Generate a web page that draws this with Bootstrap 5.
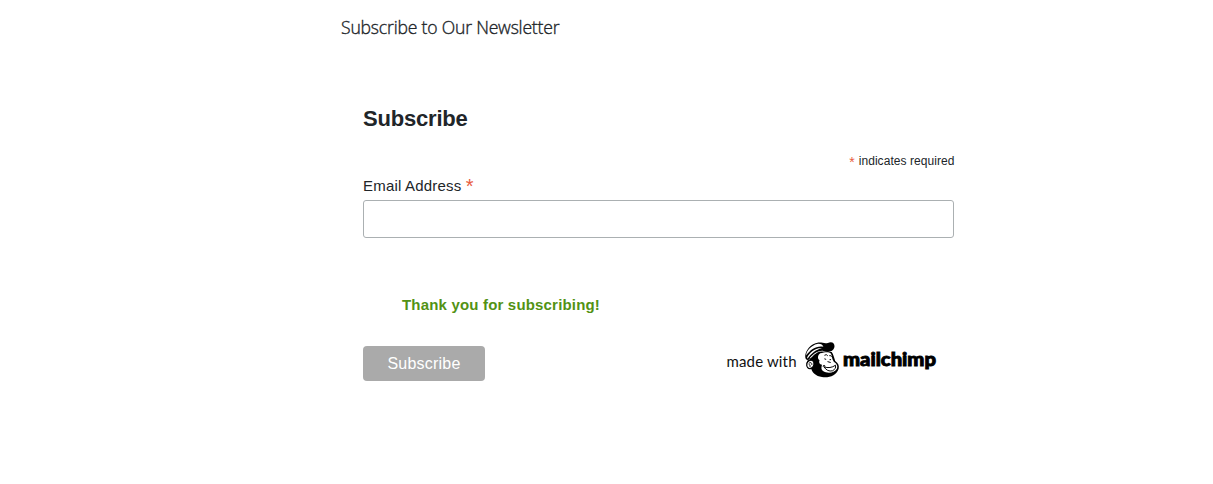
<!DOCTYPE html>
<html lang="en">
<head>
<meta charset="utf-8">
<title>Newsletter</title>
<meta name="viewport" content="width=device-width, initial-scale=1">
<link href="https://cdn.jsdelivr.net/npm/bootstrap@5.3.0/dist/css/bootstrap.min.css" rel="stylesheet">
<style>
body{font-family:"Liberation Sans",Arial,sans-serif;color:#212529;overflow:hidden}
.page-wrap{width:636px;margin-left:341px;padding-top:12px}
.intro{font:300 17.6px/30px "Open Sans",sans-serif;letter-spacing:-.2px;white-space:nowrap;-webkit-text-stroke:.35px #212529}
.signup{margin:62px 0 0 22px;width:592px}
.signup h2{font-size:22px;font-weight:700;line-height:30px;letter-spacing:-.2px}
.required-note{font-size:12px;line-height:18px;margin-top:18px;letter-spacing:.06px;padding-right:.5px}
.required-note .star{font-size:14px;line-height:12px;vertical-align:-2px;margin-right:.5px}
.star{color:#e85c41}
.signup label{font-size:15px;line-height:20px;margin-top:6px;letter-spacing:.2px}
.signup label .star{font-size:20px;line-height:15px;vertical-align:-2px}
.email-box{width:591px;height:38px;border:1px solid #abb0b2;border-radius:3px;margin-top:4px}
.thanks{color:#529214;font-size:15px;font-weight:700;line-height:20px;margin:57px 0 0 39px;letter-spacing:.18px}
.send{width:122px;height:35px;background:#aaa;color:#fff;font-size:16px;border-radius:4px;border:0;padding:0;letter-spacing:.22px}
.actions{margin-top:25px;height:44px}
.send{margin-top:6px}
.maker{margin-right:15px}
</style>
</head>
<body>
<main class="page-wrap">
<div class="intro">Subscribe to Our Newsletter</div>
<form class="signup">
<h2 class="mb-0">Subscribe</h2>
<div class="required-note text-end"><span class="star">*</span> indicates required</div>
<label for="email" class="d-block">Email Address <span class="star">*</span></label>
<input id="email" type="email" class="email-box form-control">
<div class="thanks">Thank you for subscribing!</div>
<div class="actions d-flex justify-content-between align-items-start">
<button type="button" class="btn send">Subscribe</button>
<svg class="maker" width="220" height="44" viewBox="0 0 220 44" role="img" aria-label="made with mailchimp">
<text x="6.5" y="27" font-family="Lato" font-size="15" textLength="70" fill="#111">made with</text>
<g transform="translate(79 -3) scale(.348)" stroke-linecap="round" stroke-linejoin="round">
<path d="M28 50C24 59 25 64 28 65C39 59 46 43 65 42L94 43C99 50 101 59 104 69C113 75 116 82 114 91C108 111 86 118 66 115C48 112 39 103 35 91C24 91 20 82 22 73C24 67 28 65 31 65" fill="#000"/>
<path d="M61 47C75 43 86 42 92 48C95 54 94 63 100 71C109 76 112 84 109 91C101 105 80 105 69 98C62 93 65 86 66 80C59 79 56 73 59 67C52 62 54 52 61 47Z" fill="#fff"/>
<path d="M31 67C22 69 20 82 25 88C31 95 42 88 43 79C44 70 38 64 31 67Z" fill="#fff" stroke="#000" stroke-width="3.5"/>
<path d="M29 75Q37 70 37 79M29 79Q34 80 32 85" fill="none" stroke="#000" stroke-width="2.6"/>
<path d="M20 64C12 44 33 20 51 17C65 14 72 20 83 17C95 12 103 18 102 29C98 43 84 46 70 40C54 38 39 49 26 67Z" fill="#000"/>
<path d="M21 53C19 41 37 23 52 20C61 18 68 22 70 28C51 24 32 36 21 53Z" fill="#fff"/>
<path d="M23 60C29 47 45 31 65 32C50 36 36 45 25 62Z" fill="#fff"/>
<path d="M74 52Q79 48 82 53M88 53Q91 51 93 56M74 63L77 64M89 65L91 65M83 71L90 73M69 83Q72 79 75 83M72 86Q90 92 105 81Q109 90 97 97Q81 101 72 86Z" fill="none" stroke="#000" stroke-width="2.8"/>
</g>
<text x="123" y="26.2" font-family="Lato" font-weight="900" font-size="18.5" textLength="93" lengthAdjust="spacingAndGlyphs" stroke="#000" stroke-width=".9">mailchimp</text>
</svg>
</div>
</form>
</main>
<script src="https://cdn.jsdelivr.net/npm/bootstrap@5.3.0/dist/js/bootstrap.bundle.min.js"></script>
</body>
</html>
